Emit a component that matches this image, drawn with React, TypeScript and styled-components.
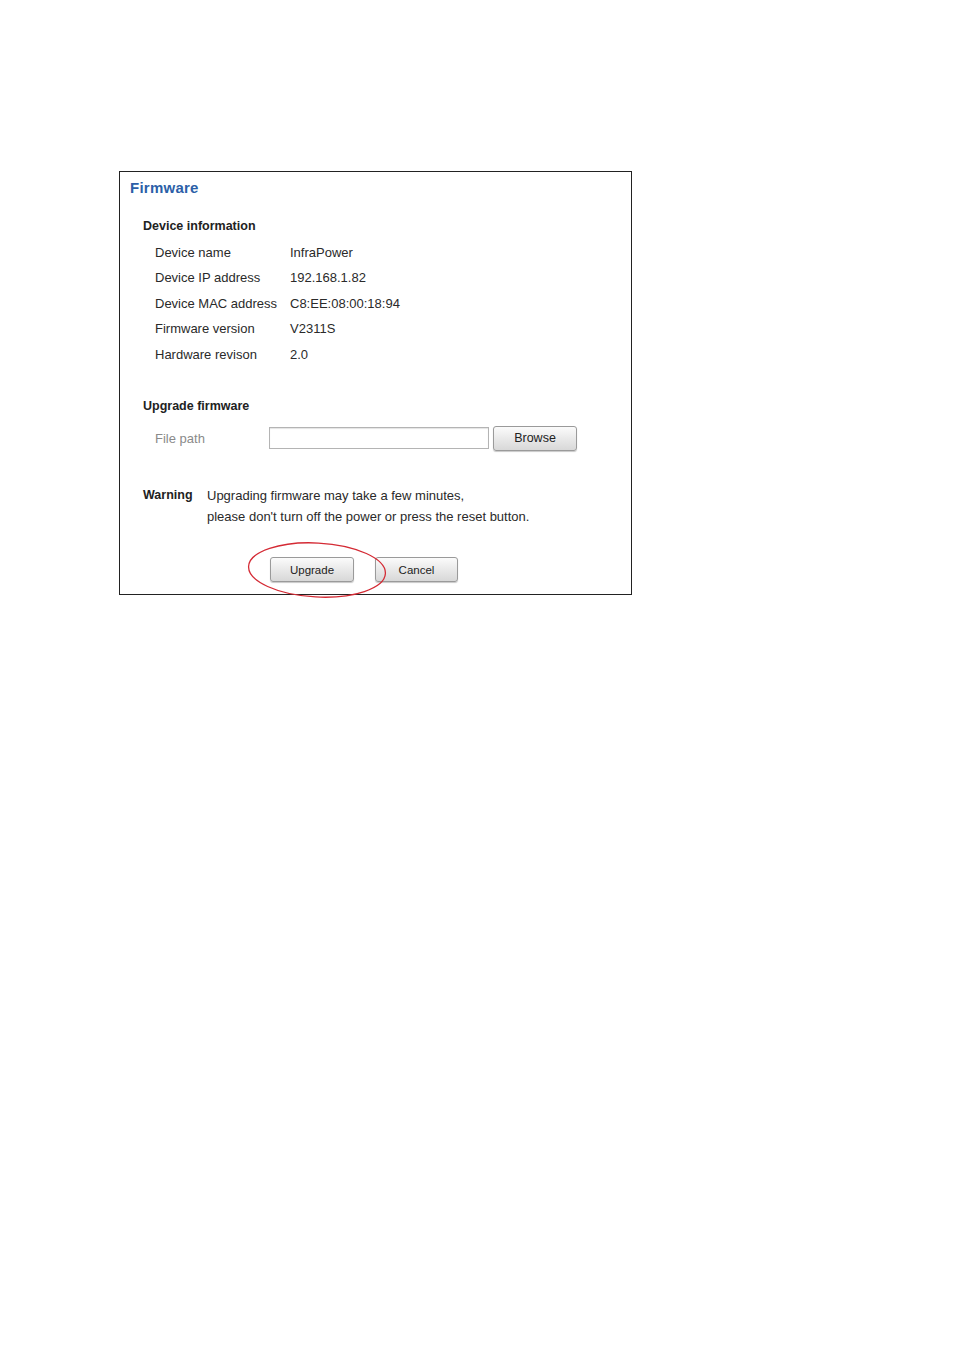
import styled, { createGlobalStyle } from 'styled-components';

const GlobalStyle = createGlobalStyle`
    html, body {
        margin: 0;
        padding: 0;
        background: #ffffff;
    }
    body {
        font-family: "Liberation Sans", Arial, sans-serif;
        color: #2a2a2a;
    }
`;

const Page = styled.div`
    width: 954px;
    height: 1350px;
    padding: 171px 0 0 119px;
    box-sizing: border-box;
`;

const Panel = styled.div`
    position: relative;
    width: 513px;
    height: 424px;
    box-sizing: border-box;
    border: 1px solid #222;
    padding: 6px 0 0 10px;
`;

const Title = styled.div`
    font-size: 15px;
    line-height: 20px;
    font-weight: bold;
    color: #2c5fa8;
    letter-spacing: 0.25px;
    margin-bottom: 16px;
`;

const Section = styled.div`
    padding-left: 13px;
`;

const Heading = styled.div<{ $gap?: number }>`
    font-size: 12.5px;
    font-weight: bold;
    line-height: 25.6px;
    color: #222;
    margin-top: ${p => p.$gap ?? 0}px;
`;

const InfoRow = styled.div`
    display: grid;
    grid-template-columns: 135px 1fr;
    padding-left: 12px;
    font-size: 13px;
    line-height: 25.6px;
    color: #2a2a2a;
`;

const FileRow = styled.div`
    display: flex;
    align-items: center;
    height: 26px;
    margin-top: 6px;
    padding-left: 12px;
`;

const FileLabel = styled.span`
    width: 114px;
    font-size: 13px;
    color: #8a8a8a;
`;

const PathInput = styled.input`
    width: 220px;
    height: 22px;
    box-sizing: border-box;
    border: 1px solid #b4b4b4;
    box-shadow: inset 0 1px 1px #e4e4e4;
    margin: 0 4px 0 0;
    padding: 0 4px;
`;

const GrayButton = styled.button<{ $w?: number; $fs?: number }>`
    width: ${p => p.$w ?? 84}px;
    height: 25px;
    box-sizing: border-box;
    border: 1px solid #9a9a9a;
    border-radius: 3px;
    background: linear-gradient(#fbfbfb, #e9e9e9 50%, #d8d8d8);
    box-shadow: 0 1px 1px #c8c8c8;
    font-family: "Liberation Sans", Arial, sans-serif;
    font-size: ${p => p.$fs ?? 12.5}px;
    color: #222;
    padding: 0;
`;

const WarningBlock = styled.div`
    display: grid;
    grid-template-columns: 64px 1fr;
    margin-top: 34px;
    font-size: 13px;
    line-height: 21px;
`;

const WarningLabel = styled.span`
    font-weight: bold;
    font-size: 12.5px;
    color: #222;
`;

const ButtonBar = styled.div`
    display: flex;
    gap: 21px;
    margin-top: 30px;
    padding-left: 127px;
`;

const Marker = styled.svg`
    position: absolute;
    left: 127px;
    top: 370px;
    overflow: visible;
    pointer-events: none;
`;

const info = [
    ['Device name', 'InfraPower'],
    ['Device IP address', '192.168.1.82'],
    ['Device MAC address', 'C8:EE:08:00:18:94'],
    ['Firmware version', 'V2311S'],
    ['Hardware revison', '2.0'],
];

export default function App() {
    return (
        <Page>
            <GlobalStyle />
            <Panel>
                <Title>Firmware</Title>
                <Section>
                    <Heading>Device information</Heading>
                    {info.map(([k, v]) => (
                        <InfoRow key={k}>
                            <span>{k}</span>
                            <span>{v}</span>
                        </InfoRow>
                    ))}
                    <Heading $gap={26}>Upgrade firmware</Heading>
                    <FileRow>
                        <FileLabel>File path</FileLabel>
                        <PathInput type="text" />
                        <GrayButton>Browse</GrayButton>
                    </FileRow>
                    <WarningBlock>
                        <WarningLabel>Warning</WarningLabel>
                        <span>
                            Upgrading firmware may take a few minutes,
                            <br />
                            please don't turn off the power or press the reset button.
                        </span>
                    </WarningBlock>
                    <ButtonBar>
                        <GrayButton $fs={11.5}>Upgrade</GrayButton>
                        <GrayButton $w={83} $fs={11.5}>Cancel</GrayButton>
                    </ButtonBar>
                </Section>
                <Marker width="140" height="58" viewBox="0 0 140 58">
                    <ellipse cx="70" cy="28" rx="68.5" ry="27" fill="none" stroke="#d42a34" strokeWidth="1.3" transform="rotate(3 70 28)" />
                </Marker>
            </Panel>
        </Page>
    );
}
